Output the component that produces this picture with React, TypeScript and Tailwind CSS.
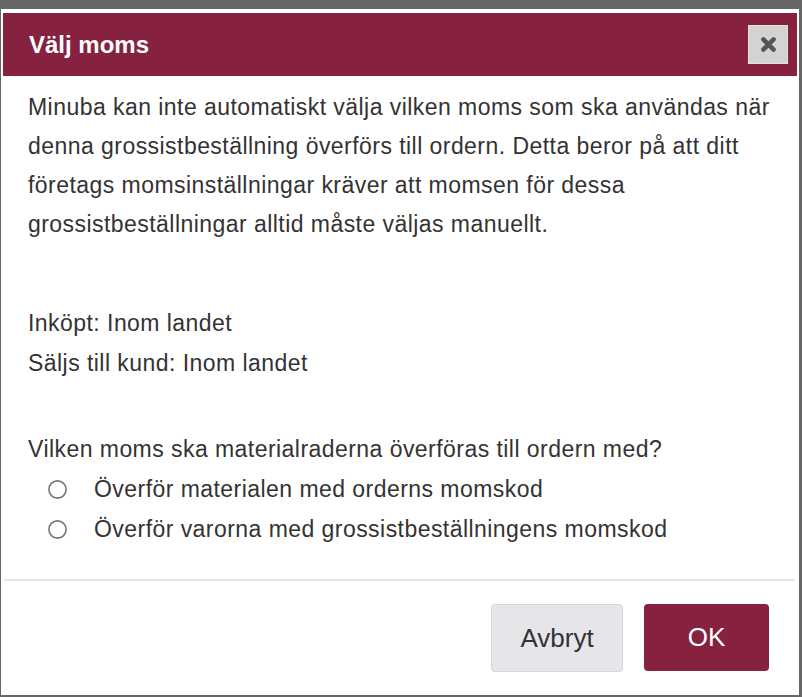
const font = { fontFamily: '"Liberation Sans", Arial, sans-serif' };

function Radio({ label }: { label: string }) {
  return (
    <label className="flex h-[40px] items-center">
      <span className="ml-[47px] flex h-[19px] w-[19px] items-center justify-center">
        <svg width="19" height="19" viewBox="0 0 19 19">
          <circle cx="9.5" cy="9.5" r="8.6" fill="white" stroke="#767676" strokeWidth="1.6" />
        </svg>
      </span>
      <span className="ml-[27px]">{label}</span>
    </label>
  );
}

export default function App() {
  return (
    <div className="h-[697px] w-[802px] overflow-hidden bg-[#666666] pt-[9px] pl-[1px]" style={font}>
      <div className="flex h-[686px] w-[798px] flex-col bg-white pt-[4px]">
        {/* header */}
        <div className="mx-[2px] flex h-[63px] items-center justify-between bg-[#86213f] pl-[26px] pr-[9px]">
          <h2 className="text-[24px] font-bold text-white">Välj moms</h2>
          <button className="flex h-[39px] w-[40px] items-center justify-center border border-[#e2e2e2] bg-[#d3d3d3]">
            <svg width="17" height="17" viewBox="0 0 16 16">
              <path d="M3.2 3.2 L12.8 12.8 M12.8 3.2 L3.2 12.8" stroke="#555" strokeWidth="4.2" strokeLinecap="round" />
            </svg>
          </button>
        </div>

        {/* body */}
        <div className="px-[27px] pt-[12px] text-[23px] tracking-[0.45px] text-[#333333]">
          <p className="leading-[39px]">
            Minuba kan inte automatiskt välja vilken moms som ska användas när denna grossistbeställning överförs till
            ordern. Detta beror på att ditt företags momsinställningar kräver att momsen för dessa
            grossistbeställningar alltid måste väljas manuellt.
          </p>
          <div className="mt-[59px] leading-[40px]">
            <p>Inköpt: Inom landet</p>
            <p>Säljs till kund: Inom landet</p>
          </div>
          <p className="mt-[47px] leading-[39px]">Vilken moms ska materialraderna överföras till ordern med?</p>
        </div>
        <div className="text-[23px] tracking-[0.45px] text-[#333333]">
          <Radio label="Överför materialen med orderns momskod" />
          <Radio label="Överför varorna med grossistbeställningens momskod" />
        </div>

        <div className="mt-[30px] ml-[3px] mr-[4px] h-[2px] bg-[#e5e5e5]" />

        {/* footer */}
        <div className="flex justify-end gap-[21px] pt-[23px] pr-[30px]">
          <button className="h-[68px] w-[132px] rounded-[4px] border border-[#d6d6da] bg-[#e6e6ea] text-[26px] text-[#333333]">
            Avbryt
          </button>
          <button className="h-[67px] w-[125px] rounded-[4px] bg-[#86213f] text-[26px] text-white">OK</button>
        </div>
      </div>
    </div>
  );
}
